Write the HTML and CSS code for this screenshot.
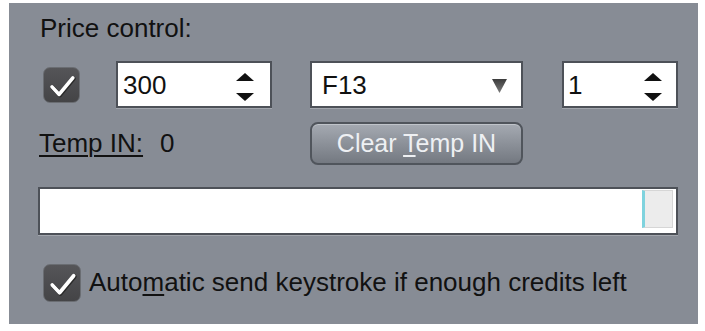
FILE: index.html
```html
<!DOCTYPE html>
<html>
<head>
<meta charset="utf-8">
<link rel="stylesheet" href="styles.css">
</head>
<body>
<div class="panel">
  <div class="title">Price control:</div>
  <div class="row controls">
    <span class="check">
      <svg width="37" height="36" viewBox="0 0 37 36"><path d="M8.5 20 L16 28 L30.5 10.5" fill="none" stroke="#2a2a2a" stroke-width="4.6" stroke-linecap="round" stroke-linejoin="round" transform="translate(0.8,0.8)"/><path d="M8.5 20 L16 28 L30.5 10.5" fill="none" stroke="#ffffff" stroke-width="3.8" stroke-linecap="round" stroke-linejoin="round"/></svg>
    </span>
    <div class="field spin spin-a">
      <span class="val">300</span>
      <svg class="arrows" width="18" height="28" viewBox="0 0 18 28"><path d="M9 0 L18 8 L0 8 Z" fill="#111"/><path d="M0 20 L18 20 L9 28 Z" fill="#111"/></svg>
    </div>
    <div class="field combo">
      <span class="val">F13</span>
      <svg class="drop" width="15" height="14" viewBox="0 0 15 14"><defs><linearGradient id="g" x1="0" y1="0" x2="0" y2="1"><stop offset="0" stop-color="#3c3c3c"/><stop offset="1" stop-color="#7a7a7a"/></linearGradient></defs><path d="M0 0 L15 0 L7.5 14 Z" fill="url(#g)"/></svg>
    </div>
    <div class="field spin spin-b">
      <span class="val">1</span>
      <svg class="arrows" width="18" height="28" viewBox="0 0 18 28"><path d="M9 0 L18 8 L0 8 Z" fill="#111"/><path d="M0 20 L18 20 L9 28 Z" fill="#111"/></svg>
    </div>
  </div>
  <div class="row temp">
    <span class="temp-label">Temp IN:</span>
    <span class="temp-val">0</span>
    <button class="btn">Clear <u>T</u>emp IN</button>
  </div>
  <div class="progress"><div class="thumb"></div></div>
  <div class="row auto">
    <span class="check check-b">
      <svg width="38" height="38" viewBox="0 0 37 36"><path d="M8.5 20 L16 28 L30.5 10.5" fill="none" stroke="#2a2a2a" stroke-width="4.6" stroke-linecap="round" stroke-linejoin="round" transform="translate(0.8,0.8)"/><path d="M8.5 20 L16 28 L30.5 10.5" fill="none" stroke="#ffffff" stroke-width="3.8" stroke-linecap="round" stroke-linejoin="round"/></svg>
    </span>
    <span class="auto-label">Auto<u>m</u>atic send keystroke if enough credits left</span>
  </div>
</div>
</body>
</html>
```

FILE: styles.css
```css
html, body {
  margin: 0;
  padding: 0;
  background: #ffffff;
}

.panel {
  margin: 3px 0 0 9px;
  width: 689px;
  height: 321px;
  box-sizing: border-box;
  background: #878c95;
  padding: 10px 0 0 29px;
  display: flex;
  flex-direction: column;
  font-family: "Liberation Sans", Arial, sans-serif;
  font-size: 26px;
  color: #111;
}

.title {
  height: 30px;
  line-height: 30px;
  padding-left: 2px;
  margin-bottom: 18px;
}

.row {
  display: flex;
  align-items: center;
}

.controls {
  height: 47px;
}

.check {
  width: 37px;
  height: 36px;
  box-sizing: border-box;
  border-radius: 7px;
  background: linear-gradient(#555558, #444446);
  border: 1px solid #6a6d72;
  display: flex;
  align-items: center;
  justify-content: center;
  margin-left: 5px;
  flex: none;
}

.check svg {
  display: block;
}

.field {
  height: 47px;
  box-sizing: border-box;
  background: #ffffff;
  border: 2px solid #4d5158;
  box-shadow: 0 1px 0 #a2a6ad;
  display: flex;
  align-items: center;
  position: relative;
  flex: none;
}

.val {
  line-height: 28px;
}

.spin-a {
  width: 156px;
  margin-left: 36px;
  padding-left: 5px;
}

.spin-a .arrows {
  margin-left: auto;
  margin-right: 16px;
  margin-top: 5px;
}

.combo {
  width: 213px;
  margin-left: 38px;
  padding-left: 10px;
}

.combo .drop {
  margin-left: auto;
  margin-right: 14px;
  margin-top: 2px;
}

.spin-b {
  width: 116px;
  margin-left: 39px;
  padding-left: 4px;
}

.spin-b .arrows {
  margin-left: auto;
  margin-right: 14px;
  margin-top: 5px;
}

.temp {
  height: 43px;
  margin-top: 14px;
}

.temp-label {
  padding-left: 1px;
  width: 120px;
  text-decoration: underline;
  text-underline-offset: 3px;
  text-decoration-thickness: 2px;
}

.temp-val {
  width: 30px;
  margin-left: 1px;
}

.btn {
  margin-left: 120px;
  width: 213px;
  height: 43px;
  box-sizing: border-box;
  border: 2px solid #50555c;
  border-radius: 8px;
  background: linear-gradient(#a5aab2 0%, #8c9199 50%, #747981 100%);
  box-shadow: inset 0 1px 0 #c0c4ca;
  color: #eef0f3;
  font-family: "Liberation Sans", Arial, sans-serif;
  font-size: 25px;
  padding: 0;
}

.btn u {
  text-underline-offset: 3px;
}

.progress {
  margin-top: 22px;
  width: 640px;
  height: 48px;
  box-sizing: border-box;
  background: #ffffff;
  border: 2px solid #4d5158;
  box-shadow: 0 1px 0 #a2a6ad;
  display: flex;
  justify-content: flex-end;
  align-items: flex-start;
  padding: 1px 3px 0 0;
}

.thumb {
  width: 31px;
  height: 38px;
  box-sizing: border-box;
  background: #ececec;
  border: 1px solid #d6d6d6;
  border-left: 3px solid #7fd3de;
}

.auto {
  height: 39px;
  margin-top: 28px;
}

.check-b {
  width: 38px;
  height: 38px;
}

.auto-label {
  margin-left: 8px;
}

.auto-label u {
  text-underline-offset: 3px;
}
```
